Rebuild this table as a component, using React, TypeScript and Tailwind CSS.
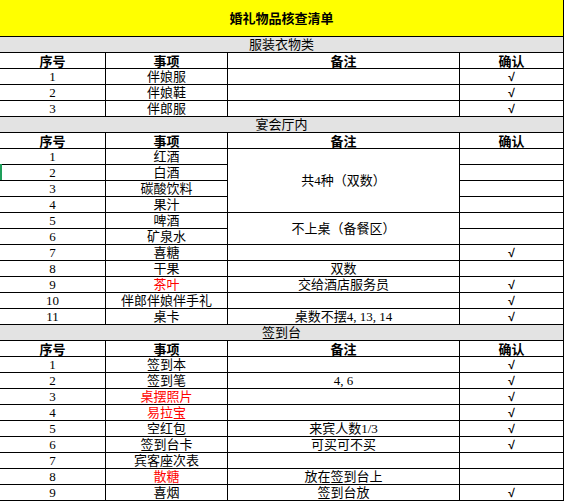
const BODY = '"Liberation Serif", "Noto Sans CJK SC", serif';
const BOLD = '"Noto Sans CJK SC", "Liberation Sans", sans-serif';

type Row = {
  no: string;
  item: string;
  note?: string;
  ok?: boolean;
  red?: boolean;
};

const clothes: Row[] = [
  { no: "1", item: "伴娘服", ok: true },
  { no: "2", item: "伴娘鞋", ok: true },
  { no: "3", item: "伴郎服", ok: true },
];

const checkin: Row[] = [
  { no: "1", item: "签到本", ok: true },
  { no: "2", item: "签到笔", note: "4, 6", ok: true },
  { no: "3", item: "桌摆照片", ok: true, red: true },
  { no: "4", item: "易拉宝", ok: true, red: true },
  { no: "5", item: "空红包", note: "来宾人数1/3", ok: true },
  { no: "6", item: "签到台卡", note: "可买可不买", ok: true },
  { no: "7", item: "宾客座次表" },
  { no: "8", item: "散糖", note: "放在签到台上", red: true },
  { no: "9", item: "喜烟", note: "签到台放", ok: true },
];

const cell = "border-b border-r border-black flex items-center justify-center leading-none whitespace-nowrap";

function Section({ title }: { title: string }) {
  return (
    <div className={`${cell} col-span-4 bg-[#e3e3e3] text-[13px] text-black`} style={{ fontFamily: BODY }}>
      {title}
    </div>
  );
}

function Head() {
  return (
    <>
      {["序号", "事项", "备注", "确认"].map((h) => (
        <div key={h} className={`${cell} text-[13px] font-bold text-black`} style={{ fontFamily: BOLD }}>
          {h}
        </div>
      ))}
    </>
  );
}

function Check({ ok }: { ok?: boolean }) {
  return (
    <div
      className={`${cell} text-[12px] font-bold text-black`}
      style={{ fontFamily: '"Liberation Sans", "DejaVu Sans", sans-serif' }}
    >
      {ok ? "√" : ""}
    </div>
  );
}

function Line({ r }: { r: Row }) {
  return (
    <>
      <div className={cell}>{r.no}</div>
      <div className={`${cell} ${r.red ? "text-[#ff0000]" : ""}`}>{r.item}</div>
      <div className={cell}>{r.note ?? ""}</div>
      <Check ok={r.ok} />
    </>
  );
}

export default function App() {
  return (
    <div className="relative w-[565px] h-[501px] bg-white overflow-hidden text-black">
      <div className="w-[564px]">
        <div
          className="h-[37px] bg-[#ffff00] border-b border-r border-black flex items-center justify-center text-[13px] font-bold"
          style={{ fontFamily: BOLD }}
        >
          婚礼物品核查清单
        </div>

        <div
          className="grid grid-cols-[106px_122px_232px_104px] auto-rows-[16px] text-[13px]"
          style={{ fontFamily: BODY }}
        >
          <Section title="服装衣物类" />
          <Head />
          {clothes.map((r) => (
            <Line key={r.no} r={r} />
          ))}

          <Section title="宴会厅内" />
          <Head />
          {/* rows 1-4 share one note, rows 5-6 another */}
          <div className={cell}>1</div>
          <div className={cell}>红酒</div>
          <div className={`${cell} row-span-4`}>共4种（双数）</div>
          <Check />
          <div className={cell}>2</div>
          <div className={cell}>白酒</div>
          <Check />
          <div className={cell}>3</div>
          <div className={cell}>碳酸饮料</div>
          <Check />
          <div className={cell}>4</div>
          <div className={cell}>果汁</div>
          <Check />
          <div className={cell}>5</div>
          <div className={cell}>啤酒</div>
          <div className={`${cell} row-span-2`}>不上桌（备餐区）</div>
          <Check />
          <div className={cell}>6</div>
          <div className={cell}>矿泉水</div>
          <Check />
          <Line r={{ no: "7", item: "喜糖", ok: true }} />
          <Line r={{ no: "8", item: "干果", note: "双数" }} />
          <Line r={{ no: "9", item: "茶叶", note: "交给酒店服务员", ok: true, red: true }} />
          <Line r={{ no: "10", item: "伴郎伴娘伴手礼", ok: true }} />
          <Line r={{ no: "11", item: "桌卡", note: "桌数不摆4, 13, 14", ok: true }} />

          <Section title="签到台" />
          <Head />
          {checkin.map((r) => (
            <Line key={r.no} r={r} />
          ))}
        </div>
      </div>

      {/* excel row selection mark */}
      <div className="absolute left-0 top-[164px] w-[2px] h-[16px] bg-[#1e9e5a]" />
    </div>
  );
}
